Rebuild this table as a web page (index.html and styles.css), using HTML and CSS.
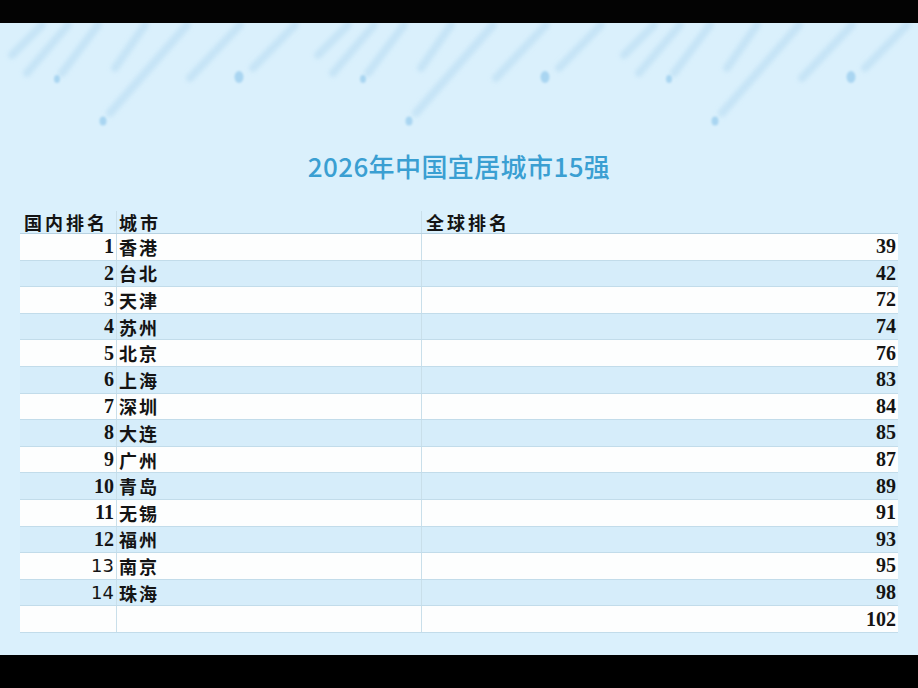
FILE: index.html
```html
<!DOCTYPE html>
<html lang="zh">
<head>
<meta charset="utf-8">
<title>2026年中国宜居城市15强</title>
<link rel="stylesheet" href="styles.css">
</head>
<body>
<div class="bar-top"></div>
<main class="screen">
  <svg class="decor" width="918" height="115" viewBox="0 0 918 115" aria-hidden="true">
    <defs>
      <filter id="soft" x="-20%" y="-20%" width="140%" height="140%">
        <feGaussianBlur stdDeviation="2.2"/>
      </filter>
      <filter id="softdot" x="-50%" y="-50%" width="200%" height="200%">
        <feGaussianBlur stdDeviation="0.8"/>
      </filter>
      <g id="unit">
        <g stroke="#bfe0f4" stroke-width="8" stroke-linecap="round" fill="none" filter="url(#soft)" opacity="0.75">
          <line x1="42" y1="2" x2="12" y2="32"/>
          <line x1="68" y1="2" x2="27" y2="50"/>
          <line x1="98" y1="2" x2="62" y2="50"/>
          <line x1="145" y1="2" x2="115" y2="45"/>
          <line x1="187" y1="2" x2="110" y2="90"/>
          <line x1="240" y1="2" x2="190" y2="55"/>
          <line x1="295" y1="2" x2="253" y2="45"/>
        </g>
        <g fill="#a9d5f1" filter="url(#softdot)">
          <ellipse cx="57" cy="56" rx="3" ry="4"/>
          <ellipse cx="239" cy="54" rx="4.5" ry="6"/>
          <ellipse cx="103" cy="98" rx="3.5" ry="4.5"/>
        </g>
      </g>
    </defs>
    <use href="#unit"/>
    <use href="#unit" transform="translate(306 0)"/>
    <use href="#unit" transform="translate(612 0)"/>
  </svg>

  <h1 class="title">2026年中国宜居城市15强</h1>

  <div class="table">
    <div class="row head">
      <div class="cell c1">国内排名</div>
      <div class="cell c2">城市</div>
      <div class="cell c3">全球排名</div>
    </div>
    <div class="row"><div class="cell c1 num">1</div><div class="cell c2">香港</div><div class="cell c3 num">39</div></div>
    <div class="row"><div class="cell c1 num">2</div><div class="cell c2">台北</div><div class="cell c3 num">42</div></div>
    <div class="row"><div class="cell c1 num">3</div><div class="cell c2">天津</div><div class="cell c3 num">72</div></div>
    <div class="row"><div class="cell c1 num">4</div><div class="cell c2">苏州</div><div class="cell c3 num">74</div></div>
    <div class="row"><div class="cell c1 num">5</div><div class="cell c2">北京</div><div class="cell c3 num">76</div></div>
    <div class="row"><div class="cell c1 num">6</div><div class="cell c2">上海</div><div class="cell c3 num">83</div></div>
    <div class="row"><div class="cell c1 num">7</div><div class="cell c2">深圳</div><div class="cell c3 num">84</div></div>
    <div class="row"><div class="cell c1 num">8</div><div class="cell c2">大连</div><div class="cell c3 num">85</div></div>
    <div class="row"><div class="cell c1 num">9</div><div class="cell c2">广州</div><div class="cell c3 num">87</div></div>
    <div class="row"><div class="cell c1 num">10</div><div class="cell c2">青岛</div><div class="cell c3 num">89</div></div>
    <div class="row"><div class="cell c1 num">11</div><div class="cell c2">无锡</div><div class="cell c3 num">91</div></div>
    <div class="row"><div class="cell c1 num">12</div><div class="cell c2">福州</div><div class="cell c3 num">93</div></div>
    <div class="row"><div class="cell c1 num sans">13</div><div class="cell c2">南京</div><div class="cell c3 num">95</div></div>
    <div class="row"><div class="cell c1 num sans">14</div><div class="cell c2">珠海</div><div class="cell c3 num">98</div></div>
    <div class="row"><div class="cell c1 num"></div><div class="cell c2"></div><div class="cell c3 num">102</div></div>
  </div>
</main>
<div class="bar-bottom"></div>
</body>
</html>
```

FILE: styles.css
```css
html, body {
  margin: 0;
  padding: 0;
  background: #000;
}

body {
  width: 918px;
  height: 688px;
  overflow: hidden;
  display: flex;
  flex-direction: column;
}

.bar-top {
  height: 23px;
  background: #030303;
  flex: none;
}

.bar-bottom {
  height: 33px;
  background: #000;
  flex: none;
}

.screen {
  height: 632px;
  flex: none;
  background: #daf0fc;
  display: flex;
  flex-direction: column;
  overflow: hidden;
}

.decor {
  display: block;
  flex: none;
}

.title {
  margin: 12px 0 0 0;
  height: 32px;
  line-height: 32px;
  text-align: center;
  font-family: "Noto Sans CJK SC", "Noto Sans", sans-serif;
  font-weight: 500;
  font-size: 26px;
  color: #3a9fd2;
  letter-spacing: 0.4px;
}

.table {
  margin: 29px 0 0 20px;
  width: 878px;
  display: flex;
  flex-direction: column;
  font-family: "Liberation Serif", "Noto Sans CJK SC", serif;
  font-weight: 700;
  color: #141414;
}

.row {
  display: grid;
  grid-template-columns: 97px 305px 476px;
  height: 26.6px;
  border-bottom: 1px solid #c2dcea;
  box-sizing: border-box;
  background: #d6edfa;
}

.row:nth-child(even) {
  background: #fdfefe;
}

.row.head {
  height: 23px;
  background: transparent;
  border-bottom-color: #b7d2e2;
}

.cell {
  display: flex;
  align-items: center;
  font-size: 18px;
  letter-spacing: 2px;
  white-space: nowrap;
  overflow: hidden;
}

.head .cell {
  letter-spacing: 3px;
}

.c1 {
  padding-left: 4px;
  border-right: 1px solid #c9dfea;
}

.c1.num {
  justify-content: flex-end;
  padding-right: 2px;
  letter-spacing: 0;
  font-size: 20px;
}

.c2 {
  padding-left: 2px;
  border-right: 1px solid #c9dfea;
}

.c3 {
  padding-left: 4px;
}

.c3.num {
  justify-content: flex-end;
  padding-right: 2px;
  letter-spacing: 0;
  font-size: 20px;
}

.c1.sans {
  font-family: "DejaVu Sans", "Liberation Sans", sans-serif;
  font-weight: 400;
  font-size: 18px;
}
```
